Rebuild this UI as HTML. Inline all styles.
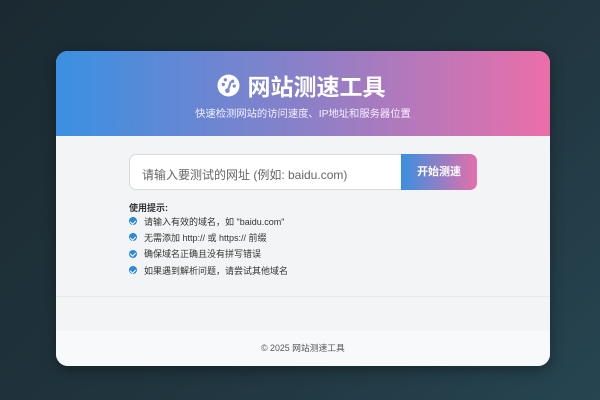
<!DOCTYPE html>
<html><head><meta charset="utf-8"><style>
*{margin:0;padding:0;box-sizing:border-box}
body{width:600px;height:400px;overflow:hidden;background:linear-gradient(135deg,#1b2a31 0%,#213640 60%,#264551 100%);font-family:"Liberation Sans","Noto Sans CJK SC",sans-serif;position:relative}
.card{position:absolute;left:56px;top:51px;width:494px;height:315px;border-radius:12px;overflow:hidden;background:#f3f4f5;box-shadow:0 4px 14px rgba(0,0,0,.35)}
.hd{height:85px;background:linear-gradient(90deg,#3a90e2,#8a80c8 50%,#ec6ea9);color:#fff;text-align:center}
.t{position:absolute;top:20px;left:-2px;width:494px;font-size:23px;font-weight:bold;display:flex;justify-content:center;align-items:center;gap:8px;height:28px}
.s{position:absolute;top:54px;left:0;width:494px;font-size:10.3px;text-align:center;color:#f4f0ff}
.in{position:absolute;left:73px;top:103px;width:273px;height:36px;background:#fff;border:1px solid #d6d9dc;border-radius:7px 0 0 7px;font-size:12px;color:#666;padding:11px 12px}
.bt{position:absolute;left:345px;top:103px;width:76px;height:36px;border-radius:0 7px 7px 0;background:linear-gradient(90deg,#3a8fe0,#e56fab);color:#fff;font-size:11px;font-weight:bold;text-align:center;line-height:36px}
.tips{position:absolute;left:73px;top:151px;font-size:9px;color:#333}
.tips b{display:block;margin-bottom:-1px;line-height:12px}
.tips div{display:flex;align-items:center;height:16.3px}
.ck{width:8px;height:8px;border-radius:50%;background:#2a8ad8;margin-right:7px;position:relative}
.ck:after{content:"";position:absolute;left:2px;top:1.5px;width:2.5px;height:4px;border:solid #fff;border-width:0 1.2px 1.2px 0;transform:rotate(45deg)}
.ln{position:absolute;top:245px;left:0;width:494px;height:1px;background:#e8e9e9}
.ft{position:absolute;top:280px;left:0;width:494px;height:35px;background:#f8f9fb;text-align:center;font-size:8.8px;color:#555;line-height:35px}
</style></head><body>
<div class="card">
<div class="hd">
<div class="t"><svg width="23" height="23" viewBox="0 0 22 22"><circle cx="11" cy="11" r="10.5" fill="#fff"/><circle cx="6" cy="10" r="1.6" fill="#7d8bd0"/><circle cx="8" cy="5.5" r="1.6" fill="#7d8bd0"/><circle cx="15" cy="7" r="1.6" fill="#7d8bd0"/><circle cx="16.5" cy="11.5" r="1.6" fill="#7d8bd0"/><path d="M10 17 L13 8" stroke="#7d8bd0" stroke-width="2" stroke-linecap="round"/><circle cx="10" cy="16" r="2.2" fill="#7d8bd0"/></svg><span>网站测速工具</span></div>
<div class="s">快速检测网站的访问速度、IP地址和服务器位置</div>
</div>
<div class="in">请输入要测试的网址 (例如: baidu.com)</div>
<div class="bt">开始测速</div>
<div class="tips"><b>使用提示:</b>
<div><span class="ck"></span>请输入有效的域名，如 "baidu.com"</div>
<div><span class="ck"></span>无需添加 http:// 或 https:// 前缀</div>
<div><span class="ck"></span>确保域名正确且没有拼写错误</div>
<div><span class="ck"></span>如果遇到解析问题，请尝试其他域名</div>
</div>
<div class="ln"></div>
<div class="ft">© 2025 网站测速工具</div>
</div>
</body></html>
